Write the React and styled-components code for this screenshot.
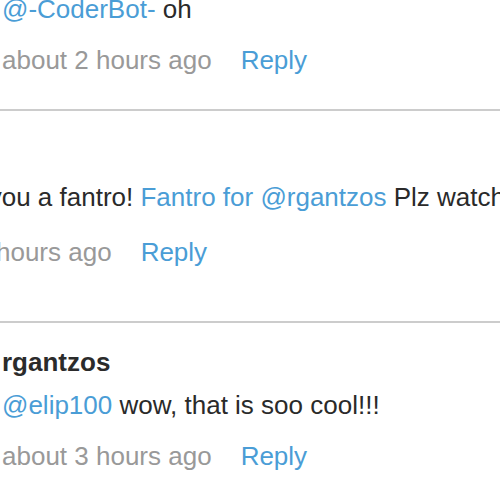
import React from "react";
import styled, { createGlobalStyle } from "styled-components";

const GlobalStyle = createGlobalStyle`
  html, body {
    margin: 0;
    padding: 0;
    background: #fff;
  }
  body {
    font-family: "Liberation Sans", Arial, Helvetica, sans-serif;
  }
`;

const Viewport = styled.div`
  width: 500px;
  height: 500px;
  overflow: hidden;
  background: #fff;
`;

// the thread is wider than the window and scrolled a bit, like the screenshot
const Thread = styled.div`
  width: 800px;
  margin-left: -100px;
  margin-top: -75px;
`;

const Comment = styled.div`
  border-top: 2px solid #cccccc;
  padding-top: ${props => (props.reply ? "24px" : "25px")};
  padding-bottom: ${props => (props.reply ? "34px" : "54px")};
  padding-left: ${props => (props.reply ? "102px" : "2px")};
  display: flex;
  flex-direction: column;
  font-size: 26px;
  line-height: 30px;
  white-space: nowrap;
`;

const Author = styled.div`
  font-weight: bold;
  color: #2b2b2b;
`;

const Body = styled.div`
  margin-top: ${props => (props.reply ? "13px" : "16px")};
  color: #2a2a2a;
`;

const Mention = styled.span`
  color: #4a9dd6;
`;

const Meta = styled.div`
  margin-top: ${props => (props.reply ? "21px" : "25px")};
  display: flex;
  color: #999999;
`;

const ReplyLink = styled.span`
  margin-left: 29px;
  color: #4a9dd6;
  cursor: pointer;
`;

const comments = [
  {
    id: 1,
    reply: true,
    author: "rgantzos",
    parts: [{ link: "@-CoderBot-" }, { text: " oh" }],
    time: "about 2 hours ago"
  },
  {
    id: 2,
    reply: false,
    author: "elip100",
    parts: [
      { text: "I made you a fantro! " },
      { link: "Fantro for @rgantzos" },
      { text: " Plz watch it!" }
    ],
    time: "about 3 hours ago"
  },
  {
    id: 3,
    reply: true,
    author: "rgantzos",
    parts: [{ link: "@elip100" }, { text: " wow, that is soo cool!!!" }],
    time: "about 3 hours ago"
  }
];

export default function App() {
  return (
    <Viewport>
      <GlobalStyle />
      <Thread>
        {comments.map(c => {
          const reply = c.reply ? 1 : 0;
          return (
            <Comment key={c.id} reply={reply}>
              <Author>{c.author}</Author>
              <Body reply={reply}>
                {c.parts.map((p, i) =>
                  p.link ? <Mention key={i}>{p.link}</Mention> : <span key={i}>{p.text}</span>
                )}
              </Body>
              <Meta reply={reply}>
                <span>{c.time}</span>
                <ReplyLink>Reply</ReplyLink>
              </Meta>
            </Comment>
          );
        })}
      </Thread>
    </Viewport>
  );
}
